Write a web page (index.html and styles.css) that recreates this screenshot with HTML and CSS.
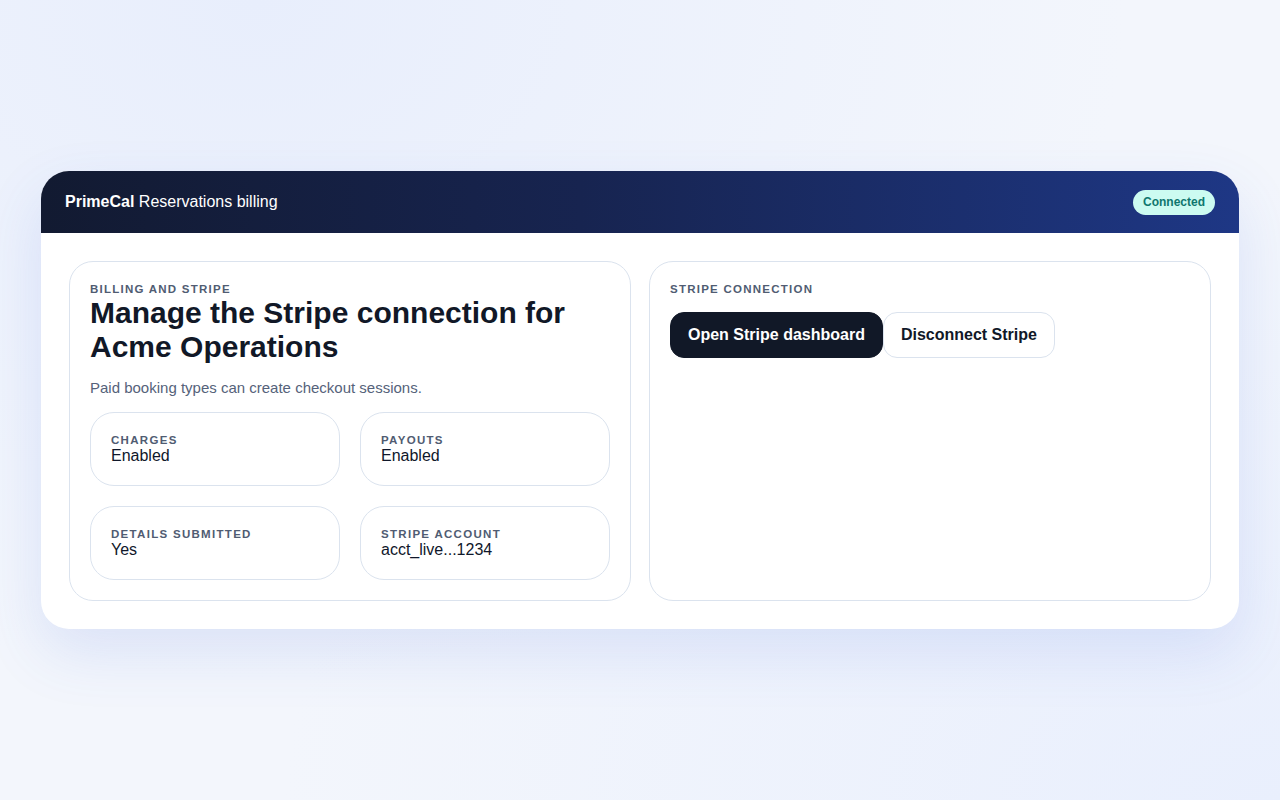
FILE: index.html
```html
<!DOCTYPE html>
<html lang="en">
<head>
<meta charset="utf-8">
<title>PrimeCal Reservations billing</title>
<link rel="stylesheet" href="styles.css">
</head>
<body>
<main class="shell">
  <section class="card">
    <header class="card-head">
      <div class="brand"><strong>PrimeCal</strong> Reservations billing</div>
      <span class="badge">Connected</span>
    </header>
    <div class="card-body">
      <section class="panel">
        <div class="eyebrow">Billing and Stripe</div>
        <h1 class="title">Manage the Stripe connection for Acme Operations</h1>
        <p class="sub">Paid booking types can create checkout sessions.</p>
        <div class="stats">
          <div class="stat"><div class="stat-label">Charges</div><div class="stat-value">Enabled</div></div>
          <div class="stat"><div class="stat-label">Payouts</div><div class="stat-value">Enabled</div></div>
          <div class="stat"><div class="stat-label">Details submitted</div><div class="stat-value">Yes</div></div>
          <div class="stat"><div class="stat-label">Stripe account</div><div class="stat-value">acct_live...1234</div></div>
        </div>
      </section>
      <section class="panel">
        <div class="eyebrow">Stripe connection</div>
        <div class="actions">
          <button class="btn btn-dark" type="button">Open Stripe dashboard</button>
          <button class="btn btn-light" type="button">Disconnect Stripe</button>
        </div>
      </section>
    </div>
  </section>
</main>
</body>
</html>
```
FILE: styles.css
```css
* { box-sizing: border-box; }
html, body { margin: 0; padding: 0; }
body {
  font-family: "Liberation Sans", Arial, sans-serif;
  color: #0f172a;
  min-height: 100vh;
  background:
    radial-gradient(ellipse at 20% 0%, #e8eefc 0%, rgba(232,238,252,0) 60%),
    radial-gradient(ellipse at 100% 100%, #e9effd 0%, rgba(233,239,253,0) 55%),
    #f3f6fc;
}
.shell {
  min-height: 100vh;
  display: flex;
  align-items: center;
  justify-content: center;
}
.card {
  width: 1198px;
  background: #ffffff;
  border-radius: 28px;
  overflow: hidden;
  box-shadow: 0 24px 60px rgba(59, 100, 220, 0.13);
}
.card-head {
  height: 62px;
  padding: 0 24px;
  display: flex;
  align-items: center;
  justify-content: space-between;
  background: linear-gradient(90deg, #121a31 0%, #172450 45%, #1e3785 100%);
  color: #ffffff;
  font-size: 16px;
}
.brand strong { font-weight: 700; }
.badge {
  display: inline-flex;
  align-items: center;
  height: 25px;
  padding: 0 10px;
  border-radius: 999px;
  background: #ccfbf1;
  color: #0f766e;
  font-size: 12px;
  font-weight: 700;
}
.card-body {
  padding: 28px;
  display: grid;
  grid-template-columns: 1fr 1fr;
  gap: 18px;
}
.panel {
  border: 1px solid #dbe3ee;
  border-radius: 24px;
  padding: 20px;
  min-width: 0;
}
.eyebrow {
  font-size: 11.5px;
  font-weight: 700;
  letter-spacing: 1.25px;
  text-transform: uppercase;
  color: #505c72;
  line-height: 14px;
}
.title {
  margin: 0;
  font-size: 30px;
  line-height: 34px;
  font-weight: 700;
  color: #111827;
}
.sub {
  margin: 13px 0 13px;
  font-size: 15px;
  line-height: 22px;
  color: #55627a;
}
.stats {
  display: grid;
  grid-template-columns: 1fr 1fr;
  gap: 20px;
}
.stat {
  border: 1px solid #dbe3ee;
  border-radius: 24px;
  padding: 20px 20px 0;
  height: 74px;
}
.stat-label {
  font-size: 11.5px;
  font-weight: 700;
  letter-spacing: 1.3px;
  text-transform: uppercase;
  color: #505c72;
  line-height: 14px;
}
.stat-value {
  font-size: 16px;
  line-height: 17px;
  color: #0f172a;
}
.actions {
  display: flex;
  margin-top: 16px;
}
.btn {
  font-family: "Liberation Sans", Arial, sans-serif;
  font-size: 16px;
  font-weight: 700;
  height: 46px;
  padding: 0 17px;
  border-radius: 14px;
  cursor: pointer;
}
.btn-dark {
  background: #111827;
  color: #ffffff;
  border: 1px solid #111827;
}
.btn-light {
  background: #ffffff;
  color: #111827;
  border: 1px solid #dbe3ee;
}
```
